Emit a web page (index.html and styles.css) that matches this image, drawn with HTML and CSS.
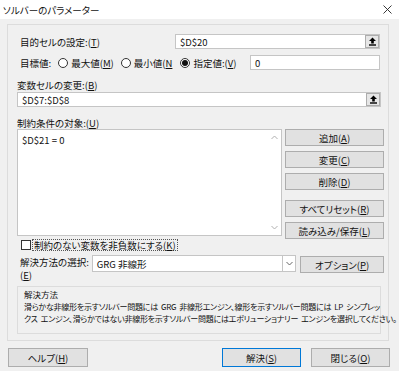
FILE: index.html
```html
<!DOCTYPE html>
<html lang="ja">
<head>
<meta charset="utf-8">
<link rel="stylesheet" href="styles.css">
</head>
<body>
<div class="win">
  <div class="titlebar">
    <span class="title">ソルバーのパラメーター</span>
    <svg class="close" width="9" height="9" viewBox="0 0 9 9"><path d="M0.5 0.5L8.5 8.5M8.5 0.5L0.5 8.5" stroke="#222" stroke-width="0.9" fill="none"/></svg>
  </div>
  <div class="panel">
    <div class="row r1">
      <span class="lbl">目的セルの設定:(<u>T</u>)</span>
      <div class="field f-target"><span class="val">$D$20</span><span class="ref"><svg width="9" height="9" viewBox="0 0 9 9"><path d="M4.5 0.5L1 4H3.2V6.5H5.8V4H8Z" fill="#000"/><rect x="1" y="7.3" width="7" height="1.4" fill="#000"/></svg></span></div>
    </div>
    <div class="row r2">
      <span class="lbl">目標値:</span>
      <span class="radio r-max"><span class="dot"></span>最大値(<u>M</u>)</span>
      <span class="radio r-min"><span class="dot"></span>最小値(<u>N</u></span>
      <span class="radio r-val on"><span class="dot"></span>指定値:(<u>V</u>)</span>
      <div class="field f-val"><span class="val">0</span></div>
    </div>
    <div class="lbl2 l3">変数セルの変更:(<u>B</u>)</div>
    <div class="field f-vars"><span class="val">$D$7:$D$8</span><span class="ref"><svg width="9" height="9" viewBox="0 0 9 9"><path d="M4.5 0.5L1 4H3.2V6.5H5.8V4H8Z" fill="#000"/><rect x="1" y="7.3" width="7" height="1.4" fill="#000"/></svg></span></div>
    <div class="lbl2 l4">制約条件の対象:(<u>U</u>)</div>
    <div class="cons">
      <div class="list">
        <span class="val">$D$21 = 0</span>
        <svg class="sc up" width="7" height="5" viewBox="0 0 7 5"><path d="M0.5 4L3.5 1L6.5 4" stroke="#b0b0b0" fill="none"/></svg>
        <svg class="sc down" width="7" height="5" viewBox="0 0 7 5"><path d="M0.5 1L3.5 4L6.5 1" stroke="#b0b0b0" fill="none"/></svg>
      </div>
      <div class="btns">
        <div class="btn">追加(<u>A</u>)</div>
        <div class="btn">変更(<u>C</u>)</div>
        <div class="btn">削除(<u>D</u>)</div>
        <div class="btn sep">すべてリセット(<u>R</u>)</div>
        <div class="btn">読み込み/保存(<u>L</u>)</div>
      </div>
    </div>
    <div class="chkrow">
      <span class="box"></span><span class="chklbl">制約のない変数を非負数にする(<u>K</u>)</span>
    </div>
    <div class="method">
      <span class="mlbl">解決方法の選択:<br>(<u>E</u>)</span>
      <div class="select"><span class="val">GRG 非線形</span><span class="arrow"><svg width="7" height="5" viewBox="0 0 7 5"><path d="M0.5 1L3.5 4L6.5 1" stroke="#666" fill="none"/></svg></span></div>
      <div class="btn opt">オプション(<u>P</u>)</div>
    </div>
    <div class="group">
      <div class="gtitle">解決方法</div>
      <div class="gline">滑らかな非線形を示すソルバー問題には GRG 非線形エンジン、線形を示すソルバー問題には LP シンプレッ</div>
      <div class="gline">クス エンジン、滑らかではない非線形を示すソルバー問題にはエボリューショナリー エンジンを選択してください。</div>
    </div>
  </div>
  <div class="footer">
    <div class="btn fb help">ヘルプ(<u>H</u>)</div>
    <div class="btn fb solve">解決(<u>S</u>)</div>
    <div class="btn fb closeb">閉じる(<u>O</u>)</div>
  </div>
</div>
</body>
</html>
```

FILE: styles.css
```css
* { box-sizing: border-box; }
html, body { margin: 0; padding: 0; }
body {
  width: 399px; height: 371px; overflow: hidden;
  background: #f0f0f0;
  font-family: "Noto Sans CJK JP", "Noto Sans", sans-serif;
  font-size: 9.5px;
  font-feature-settings: "palt";
  color: #111;
}
u { text-decoration: underline; text-underline-offset: 1px; }
.win { width: 399px; height: 371px; }
.titlebar {
  height: 19px; background: #fff;
  display: flex; align-items: center; justify-content: space-between;
  padding: 0 7px 0 3px;
}
.title { font-size: 9.5px; }
.close { display: block; }
.panel {
  margin: 5px 10px 0 7px;
  height: 317px;
  border: 1px solid #dcdcdc;
  padding: 9px 4px 0 9px;
}
.row { display: flex; align-items: center; height: 15px; }
.lbl { padding-left: 3px; }
.r1 { justify-content: space-between; padding-right: 4px; }
.field {
  height: 15px; background: #fff; border: 1px solid #c5c5c5;
  display: flex; align-items: center; justify-content: space-between;
  padding-left: 4px;
}
.f-target { width: 205px; }
.f-vars { width: 364px; margin-top: 0; }
.ref {
  width: 14px; height: 13px; border: 1px solid #adadad; background: #e6e6e6;
  display: flex; align-items: center; justify-content: center;
}
.ref svg { display: block; }
.r2 { margin-top: 6px; }
.radio { display: flex; align-items: center; }
.dot {
  width: 10px; height: 10px; border-radius: 50%;
  border: 1px solid #333; background: #fff; margin-right: 3px;
  display: flex; align-items: center; justify-content: center;
}
.on .dot::after { content: ""; width: 6px; height: 6px; border-radius: 50%; background: #111; }
.r-max { margin-left: 7px; }
.r-min { margin-left: 7px; }
.r-val { margin-left: 8px; }
.f-val { width: 130px; margin-left: auto; margin-right: 4px; }
.lbl2 { height: 12px; line-height: 12px; }
.l3 { margin-top: 9px; margin-bottom: 1px; }
.l4 { margin-top: 10px; margin-bottom: 0px; }
.cons { display: flex; justify-content: space-between; height: 110px; }
.list {
  position: relative;
  width: 265px; height: 107px; background: #fff; border: 1px solid #c5c5c5;
  padding: 3px 4px;
}
.sc { position: absolute; right: 3px; }
.sc.up { top: 5px; }
.sc.down { bottom: 5px; }
.btns { width: 99px; display: flex; flex-direction: column; gap: 5px; }
.btn {
  height: 17px; background: #e1e1e1; border: 1px solid #adadad;
  display: flex; align-items: center; justify-content: center;
}
.btn.sep { margin-top: 5px; }
.chkrow { display: flex; align-items: center; height: 12px; margin-top: 0; padding-left: 4px; }
.box { width: 10px; height: 10px; border: 1px solid #333; background: #fff; margin-right: 1px; }
.chklbl { border: 1px dotted #555; padding: 0 1px; line-height: 10px; }
.method { display: flex; align-items: flex-start; margin-top: 4px; height: 27px; }
.mlbl { width: 75px; padding-left: 3px; line-height: 13px; margin-top: 1px; }
.select {
  width: 205px; height: 17px; background: #fff; border: 1px solid #c5c5c5;
  display: flex; align-items: center; justify-content: space-between; padding-left: 4px;
}
.arrow { width: 13px; height: 15px; border-left: 1px solid #c5c5c5; display: flex; align-items: center; justify-content: center; }
.arrow svg { display: block; }
.opt { width: 84px; margin-left: 4px; margin-top: 1px; }
.group {
  width: 364px; height: 48px; margin-top: 4px;
  border: 1px solid #dcdcdc; padding: 1px 6px;
  font-size: 8px; letter-spacing: -0.25px; word-spacing: 1.5px;
}
.gtitle { line-height: 13px; letter-spacing: 0; font-size: 8.5px; }
.gline { line-height: 12px; white-space: nowrap; }
.footer { display: flex; margin-top: 7px; padding-left: 8px; }
.fb { height: 19px; width: 80px; }
.solve { margin-left: 134px; border-color: #0078d7; width: 79px; }
.closeb { margin-left: 10px; width: 79px; }
```
